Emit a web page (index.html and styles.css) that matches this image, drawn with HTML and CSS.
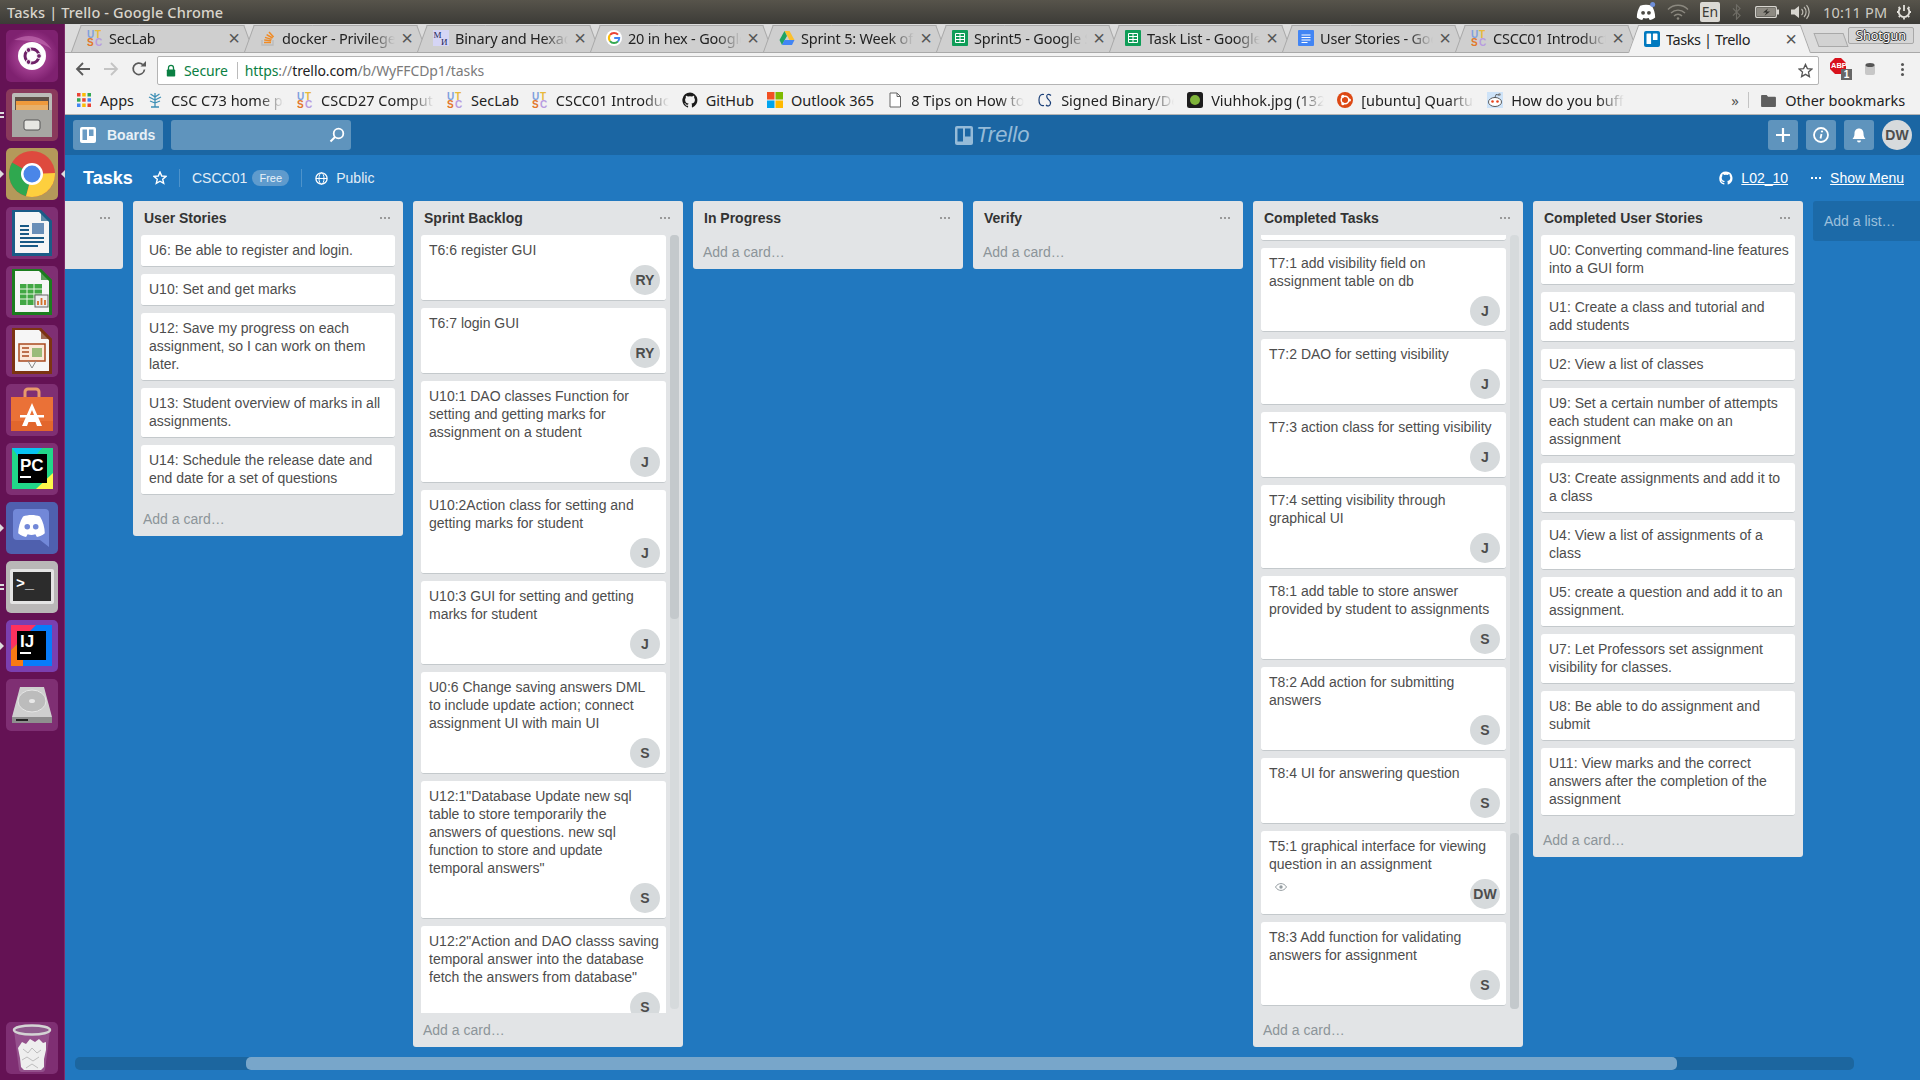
FILE: index.html
```html
<!DOCTYPE html>
<html lang="en">
<head>
<meta charset="utf-8">
<title>Tasks | Trello</title>
<link rel="stylesheet" href="styles.css">
</head>
<body>
<svg class="defs" aria-hidden="true">
  <symbol id="so" viewBox="0 0 16 16">
    <path d="M2 10v5h11v-5" fill="none" stroke="#bbb" stroke-width="1.4"/>
    <path d="M4 12.5h7M4.2 10l7 .7M5 7.4l6.6 2M6.6 4.6l6 3.4M9 2l4.6 5" fill="none" stroke="#f08a24" stroke-width="1.5"/>
  </symbol>
  <symbol id="goog" viewBox="0 0 16 16">
    <circle cx="8" cy="8" r="8" fill="#fff"/>
    <path d="M12 4.7A5.2 5.2 0 0 0 4 4.9" fill="none" stroke="#ea4335" stroke-width="2"/>
    <path d="M4 4.9a5.2 5.2 0 0 0 0 6.2" fill="none" stroke="#fbbc05" stroke-width="2"/>
    <path d="M4 11.1a5.2 5.2 0 0 0 8 .2" fill="none" stroke="#34a853" stroke-width="2"/>
    <path d="M12 11.3A5.2 5.2 0 0 0 13.2 8H8.2" fill="none" stroke="#4285f4" stroke-width="2"/>
  </symbol>
  <symbol id="drive" viewBox="0 0 16 16">
    <path d="M5.5 1h5l5 9h-5z" fill="#fbc02d"/><path d="M5.5 1L0.5 10l2.5 5 5-9z" fill="#1fa463"/><path d="M3 15h10l2.5-5h-10z" fill="#4285f4"/>
  </symbol>
  <symbol id="sheet" viewBox="0 0 16 16">
    <rect width="16" height="16" rx="1" fill="#0f9d58"/>
    <path d="M3.5 3.5h9v9h-9zM3.5 6.5h9M3.5 9.5h9M8 3.5v9" fill="none" stroke="#fff" stroke-width="1"/>
  </symbol>
  <symbol id="gdoc" viewBox="0 0 16 16">
    <rect width="16" height="16" rx="1" fill="#4285f4"/>
    <path d="M3.5 5h9M3.5 7.5h9M3.5 10h9M3.5 12.5h6" stroke="#fff" stroke-width="1"/>
  </symbol>
  <symbol id="tr" viewBox="0 0 16 16">
    <rect width="16" height="16" rx="2" fill="currentColor"/>
    <rect x="2.5" y="2.5" width="4.6" height="10.5" rx=".6" class="tr-b"/><rect x="8.9" y="2.5" width="4.6" height="6.5" rx=".6" class="tr-b"/>
  </symbol>
  <symbol id="gh" viewBox="0 0 16 16">
    <path d="M8 .5a7.7 7.7 0 0 0-2.4 15c.4.1.5-.2.5-.4v-1.4c-2.1.5-2.6-1-2.6-1-.4-.9-.9-1.1-.9-1.1-.7-.5 0-.5 0-.5.8.1 1.2.8 1.2.8.7 1.200 1.800.9 2.300.7 0-.5.300-.9.500-1.100-1.700-.2-3.500-.9-3.500-3.800 0-.8.300-1.500.8-2-.1-.2-.3-1 .1-2 0 0 .6-.2 2.100.8a7.300 7.300 0 0 1 3.800 0c1.500-1 2.100-.8 2.100-.8.400 1 .2 1.800.1 2 .5.500.8 1.200.8 2 0 2.900-1.800 3.600-3.500 3.800.3.200.5.700.5 1.400v2.100c0 .2.100.5.500.4A7.700 7.700 0 0 0 8 .5z" fill="currentColor"/>
  </symbol>
  <symbol id="dc" viewBox="0 0 24 24">
    <path d="M5 4.500C9 2.800 15 2.800 19 4.500C21.500 8.500 23 13.500 23 18.500C21 20.300 18.500 21.200 16.500 21.500L15.200 19.300C13 20 11 20 8.800 19.300L7.500 21.500C5.500 21.200 3 20.300 1 18.500C1 13.500 2.500 8.500 5 4.500Z" fill="currentColor"/>
  </symbol>
  <symbol id="doc" viewBox="0 0 52 52">
    <path d="M6 3h29l11 11v35H6z" fill="currentColor"/>
    <path d="M9 5h24l10 10v31H9z" fill="#f6f6f6"/>
    <path d="M35 3l11 11H35z" fill="currentColor" opacity=".7"/>
  </symbol>
</svg>

<header class="panel">
  <span class="panel-title">Tasks | Trello - Google Chrome</span>
  <div class="tray">
    <span class="tray-i t-dc">
      <svg class="i20" viewBox="0 0 24 24"><use href="#dc"/><circle cx="8.500" cy="13" r="2.300" fill="#4c4a44"/><circle cx="15.500" cy="13" r="2.300" fill="#4c4a44"/><circle cx="20" cy="3" r="3" fill="#6e8ed8"/></svg>
    </span>
    <svg class="t-wifi" viewBox="0 0 22 16"><path d="M1 5.500a14 14 0 0 1 20 0M4 9a10 10 0 0 1 14 0M7 12a5.500 5.500 0 0 1 8 0" fill="none" stroke="#8b887f" stroke-width="1.400"/><circle cx="11" cy="14.500" r="1.300" fill="#8b887f"/></svg>
    <span class="t-en">En</span>
    <svg class="t-bt" viewBox="0 0 10 18"><path d="M1 5l8 8-4 4V1l4 4-8 8" fill="none" stroke="#6f6d66" stroke-width="1.300"/></svg>
    <svg class="t-bat" viewBox="0 0 24 12"><rect x=".7" y=".7" width="20.600" height="10.600" rx="1" fill="none" stroke="#d8d6d0" stroke-width="1.300"/><rect x="22" y="3.500" width="2" height="5" fill="#d8d6d0"/><rect x="2" y="2" width="18" height="8" fill="#8d8a82"/><path d="M13 2.500L8 6.500h3.500L9.500 9.800 15 5.500h-3.500z" fill="#2f2e2a"/></svg>
    <svg class="t-vol" viewBox="0 0 20 16"><path d="M1 5.500h3.500L9 2v12L4.500 10.500H1z" fill="#d8d6d0"/><path d="M11.500 5a4 4 0 0 1 0 6M14 3a7 7 0 0 1 0 10M16.500 1.200a10 10 0 0 1 0 13.600" fill="none" stroke="#bdbab2" stroke-width="1.200"/></svg>
    <span class="t-clock">10:11 PM</span>
    <svg class="t-gear" viewBox="0 0 16 16"><path d="M8 1v6" stroke="#e4e2dc" stroke-width="1.800"/><path d="M4.500 3.800a5.300 5.300 0 1 0 7 0" fill="none" stroke="#e4e2dc" stroke-width="1.800"/><path d="M1 8h1.500M13.500 8H15M8 14v1.500M2.600 3l1 1M12.400 4l1-1M2.800 13l1-1M12.200 12l1 1" stroke="#e4e2dc" stroke-width="1.800"/></svg>
  </div>
</header>

<div class="desk">
  <nav class="launcher">
    <div class="tile">
      <svg viewBox="0 0 52 52"><defs><radialGradient id="gd"><stop offset="0" stop-color="#c45bb0"/><stop offset="1" stop-color="#7f2170"/></radialGradient></defs><rect width="52" height="52" rx="5" fill="url(#gd)"/><path d="M8 10c14-8 30-4 38 10-6-6-18-10-38-10z" fill="#d27fc0" opacity=".5"/><circle cx="26" cy="26" r="14" fill="#fff"/><circle cx="26" cy="26" r="7" fill="none" stroke="#6f2168" stroke-width="3"/><circle cx="33" cy="26" r="2.400" fill="#6f2168" stroke="#fff"/><circle cx="22.500" cy="20" r="2.400" fill="#6f2168" stroke="#fff"/><circle cx="22.500" cy="32" r="2.400" fill="#6f2168" stroke="#fff"/></svg>
    </div>
    <div class="tile run-l2">
      <svg viewBox="0 0 52 52"><rect width="52" height="52" rx="5" fill="#8a3a5c"/><rect x="6" y="4" width="40" height="44" rx="2" fill="#bcbcb8"/><rect x="9" y="8" width="34" height="13" fill="#5e5048"/><rect x="10" y="12" width="32" height="9" fill="#ef9a3c"/><rect x="10" y="16" width="32" height="5" fill="#e8b06a"/><rect x="6" y="21" width="40" height="27" fill="#a7a7a3"/><rect x="18" y="31" width="16" height="10" rx="2" fill="#e6e6e2" stroke="#555"/></svg>
    </div>
    <div class="tile run-l run-r">
      <svg viewBox="0 0 52 52"><rect width="52" height="52" rx="5" fill="#b4995a"/><circle cx="26" cy="26" r="23" fill="#de4a3e"/><path d="M26 26L6.100 14.500A23 23 0 0 0 20 48.200z" fill="#2fa84f"/><path d="M26 26l23-1A23 23 0 0 1 20 48.200z" fill="#fdcf3e"/><circle cx="26" cy="26" r="11" fill="#fff"/><circle cx="26" cy="26" r="8.500" fill="#4a86e8"/></svg>
    </div>
    <div class="tile tile-doc writer">
      <svg viewBox="0 0 52 52"><use href="#doc"/><path d="M14 19h9M14 23h9M14 27h9M14 31h24M14 35h24M14 39h18" stroke="#1a5a85" stroke-width="2"/><rect x="26" y="16" width="12" height="11" fill="#6a8fb8"/></svg>
    </div>
    <div class="tile tile-doc calc">
      <svg viewBox="0 0 52 52"><use href="#doc"/><rect x="14" y="18" width="22" height="21" fill="#43a845"/><path d="M14 23h22M14 28h22M14 33h22M21 18v21M28 18v21" stroke="#eaf5e5"/><rect x="29" y="29" width="13" height="12" fill="#eee" stroke="#666"/><path d="M32 39v-4M35.500 39v-7M39 39v-5" stroke="#d3702b" stroke-width="1.800"/></svg>
    </div>
    <div class="tile tile-doc impress">
      <svg viewBox="0 0 52 52"><use href="#doc"/><rect x="13" y="19" width="26" height="17" fill="#fbe8d8" stroke="#a9491f" stroke-width="1.500"/><path d="M16 23h7M16 27h7M16 31h7" stroke="#a9491f" stroke-width="1.500"/><rect x="26" y="23" width="10" height="9" fill="#9bbb7a"/><path d="M26 43l-4-7M26 43l4-7" stroke="#888"/></svg>
    </div>
    <div class="tile tile-purple">
      <svg viewBox="0 0 52 52"><path d="M19 15V8a3 3 0 0 1 3-3h8a3 3 0 0 1 3 3v7" fill="none" stroke="#e89a6b" stroke-width="3"/><path d="M5 13h42v34H5z" fill="#ea7137"/><path d="M5 37h42v10H5z" fill="#e2662c"/><path d="M26 19l-10 23h5l1.500-4h7l1.500 4h5zM24 31l2-5 2 5z" fill="#fff"/><rect x="14" y="31" width="24" height="2.500" fill="#fff"/></svg>
    </div>
    <div class="tile tile-purple">
      <svg viewBox="0 0 52 52"><rect x="6" y="5" width="41" height="41" fill="#21d789"/><path d="M6 5h30L20 24z" fill="#07c3f2"/><path d="M47 5v25L30 46h17z" fill="#fcf84a"/><rect x="12" y="11" width="29" height="29" fill="#000"/><text x="14" y="28" class="tile-t">PC</text><rect x="14" y="33" width="11" height="2" fill="#fff"/></svg>
    </div>
    <div class="tile run-l dc-tile">
      <svg viewBox="0 0 52 52"><rect width="52" height="52" rx="5" fill="#4f60ae"/><path d="M11 7h28a4 4 0 0 1 4 4v34l-9-7H11a4 4 0 0 1-4-4V11a4 4 0 0 1 4-4z" fill="#7288d8"/><svg x="11" y="9" width="29" height="29" viewBox="0 0 24 24" class="white"><use href="#dc"/><circle cx="8.500" cy="13" r="2.300" fill="#7288d8"/><circle cx="15.500" cy="13" r="2.300" fill="#7288d8"/></svg></svg>
    </div>
    <div class="tile run-l2">
      <svg viewBox="0 0 52 52"><rect width="52" height="52" rx="5" fill="#b9b7b7"/><rect x="4" y="8" width="44" height="35" rx="2" fill="#e4e4e4"/><rect x="7" y="11" width="38" height="29" fill="#2c2c2c"/><text x="10" y="27" class="tile-t2">&gt;_</text></svg>
    </div>
    <div class="tile run-l ij-tile">
      <svg viewBox="0 0 52 52"><rect width="52" height="52" rx="5" fill="#7b3fb0"/><rect x="5" y="5" width="41" height="41" fill="#087cfa"/><path d="M5 5h25L5 30z" fill="#fe315d"/><path d="M5 30l12-12v28H5z" fill="#f97a12"/><rect x="11" y="11" width="29" height="29" fill="#000"/><text x="14" y="27" class="tile-t">IJ</text><rect x="14" y="32" width="11" height="2" fill="#fff"/></svg>
    </div>
    <div class="tile tile-purple">
      <svg viewBox="0 0 52 52"><path d="M14 8h24l8 30v6H6v-6z" fill="#cfcfcf"/><ellipse cx="26" cy="22" rx="14" ry="11" fill="#bcbcbc" stroke="#e6e6e6"/><ellipse cx="26" cy="22" rx="3" ry="2" fill="#e8e8e8"/><path d="M6 38h40v6H6z" fill="#8f8f8f"/><rect x="10" y="40" width="12" height="2" fill="#222"/></svg>
    </div>
    <div class="tile tile-purple trash">
      <svg viewBox="0 0 52 52"><path d="M8 8l5 40a3 3 0 0 0 3 2h20a3 3 0 0 0 3-2l5-40z" fill="#a66ca1" opacity=".55"/><path d="M12 26l4-6 4 2 4-5 5 3 4-3 4 4 3-1 0 8-2 9 0 8-3 3H18l-3-3-1-9z" fill="#eeeeee"/><path d="M17 27l5 4 4-5 5 5 4-3M16 38l5-3 6 4 6-4M20 46l6-4 6 4" fill="none" stroke="#bdbdbd"/><ellipse cx="26" cy="8" rx="18" ry="4.500" fill="#8e5a8c" stroke="#d4d4d4" stroke-width="2.500"/></svg>
    </div>
  </nav>

  <div class="chrome">
    <div class="tabstrip">
      <div class="tab"><svg class="fav" viewBox="0 0 16 16"><text x="0" y="7.500" class="fav-l fu">U</text><text x="8" y="7.500" class="fav-l ft">T</text><text x="0" y="15.500" class="fav-l fs">S</text><text x="8" y="15.500" class="fav-l fc">C</text></svg><span class="tab-t fade">SecLab</span><span class="tab-x">×</span></div>
      <div class="tab"><svg class="fav"><use href="#so"/></svg><span class="tab-t fade">docker - Privileged</span><span class="tab-x">×</span></div>
      <div class="tab"><svg class="fav" viewBox="0 0 16 16"><rect width="16" height="16" fill="#d5d5f5"/><text x="0.500" y="8" class="fav-s">M</text><text x="8" y="15" class="fav-s">И</text></svg><span class="tab-t fade">Binary and Hexadecimal</span><span class="tab-x">×</span></div>
      <div class="tab"><svg class="fav"><use href="#goog"/></svg><span class="tab-t fade">20 in hex - Google Search</span><span class="tab-x">×</span></div>
      <div class="tab"><svg class="fav"><use href="#drive"/></svg><span class="tab-t fade">Sprint 5: Week of Mar</span><span class="tab-x">×</span></div>
      <div class="tab"><svg class="fav"><use href="#sheet"/></svg><span class="tab-t fade">Sprint5 - Google Sheets</span><span class="tab-x">×</span></div>
      <div class="tab"><svg class="fav"><use href="#sheet"/></svg><span class="tab-t fade">Task List - Google Sheets</span><span class="tab-x">×</span></div>
      <div class="tab"><svg class="fav"><use href="#gdoc"/></svg><span class="tab-t fade">User Stories - Google Docs</span><span class="tab-x">×</span></div>
      <div class="tab"><svg class="fav" viewBox="0 0 16 16"><text x="0" y="7.500" class="fav-l fu">U</text><text x="8" y="7.500" class="fav-l ft">T</text><text x="0" y="15.500" class="fav-l fs">S</text><text x="8" y="15.500" class="fav-l fc">C</text></svg><span class="tab-t fade">CSCC01 Introduction</span><span class="tab-x">×</span></div>
      <div class="tab tab-on"><svg class="fav fav-tr"><use href="#tr"/></svg><span class="tab-t tab-t-on">Tasks | Trello</span><span class="tab-x">×</span></div>
      <div class="newtab"></div>
      <div class="profile">Shotgun</div>
    </div>

    <div class="toolbar">
      <svg class="tb-i" viewBox="0 0 16 16"><path d="M15 8H2M8 2L2 8l6 6" fill="none" stroke="#5a5a5a" stroke-width="1.800"/></svg>
      <svg class="tb-i tb-f" viewBox="0 0 16 16"><path d="M1 8h13M8 2l6 6-6 6" fill="none" stroke="#c4c4c4" stroke-width="1.800"/></svg>
      <svg class="tb-i tb-r" viewBox="0 0 16 16"><path d="M13.500 8.500A5.700 5.700 0 1 1 11.800 3.700" fill="none" stroke="#5a5a5a" stroke-width="1.700"/><path d="M9.500 5.500H15V0z" fill="#5a5a5a"/></svg>
      <div class="omni">
        <svg class="lock" viewBox="0 0 10 13"><path d="M2.500 6V3.800a2.500 2.500 0 0 1 5 0V6" fill="none" stroke="#0b8043" stroke-width="1.300"/><rect x=".8" y="5.500" width="8.400" height="7" rx=".8" fill="#0b8043"/></svg>
        <span class="secure">Secure</span>
        <span class="omni-div"></span>
        <span class="url"><span class="u-g">https</span><span class="u-s">://</span><span class="u-d">trello.com</span><span class="u-s">/b/WyFFCDp1/tasks</span></span>
        <svg class="o-star" viewBox="0 0 16 16"><path d="M8 1.500l2 4.500 4.800.5-3.600 3.200 1 4.800L8 12.100l-4.200 2.400 1-4.800L1.200 6.500 6 6z" fill="none" stroke="#555" stroke-width="1.400"/></svg>
      </div>
      <div class="abp">
        <svg viewBox="0 0 16 16"><path d="M5 0h6l5 5v6l-5 5H5l-5-5V5z" fill="#d8121c"/></svg>
        <span class="abp-t">ABP</span><span class="abp-n">1</span>
      </div>
      <svg class="jar" viewBox="0 0 12 14"><rect x="1" y="2" width="10" height="11" rx="2" fill="#c7c7c7"/><ellipse cx="6" cy="3" rx="4.500" ry="2" fill="#555"/></svg>
      <span class="menu-dots"></span>
    </div>

    <div class="bookmarks">
      <div class="bm"><svg class="fav" viewBox="0 0 16 16"><g><rect x="1" y="1" width="3.500" height="3.500" fill="#ea4335"/><rect x="6.200" y="1" width="3.500" height="3.500" fill="#fbbc05"/><rect x="11.500" y="1" width="3.500" height="3.500" fill="#34a853"/><rect x="1" y="6.200" width="3.500" height="3.500" fill="#34a853"/><rect x="6.200" y="6.200" width="3.500" height="3.500" fill="#ea4335"/><rect x="11.500" y="6.200" width="3.500" height="3.500" fill="#4285f4"/><rect x="1" y="11.500" width="3.500" height="3.500" fill="#4285f4"/><rect x="6.200" y="11.500" width="3.500" height="3.500" fill="#fbbc05"/><rect x="11.500" y="11.500" width="3.500" height="3.500" fill="#ea4335"/></g></svg><span class="bm-t">Apps</span></div>
      <div class="bm"><svg class="fav" viewBox="0 0 16 16"><path d="M8 1v14M8 5L3.500 2M8 5l4.500-3M8 8L2 5M8 8l6-3M8 11L3 9M8 11l5-2M4 15h8" fill="none" stroke="#3d8fb5" stroke-width="1.300"/></svg><span class="bm-t bm-cut fade">CSC C73 home page</span></div>
      <div class="bm"><svg class="fav" viewBox="0 0 16 16"><text x="0" y="7.500" class="fav-l fu">U</text><text x="8" y="7.500" class="fav-l ft">T</text><text x="0" y="15.500" class="fav-l fs">S</text><text x="8" y="15.500" class="fav-l fc">C</text></svg><span class="bm-t bm-cut fade">CSCD27 Computer Security</span></div>
      <div class="bm"><svg class="fav" viewBox="0 0 16 16"><text x="0" y="7.500" class="fav-l fu">U</text><text x="8" y="7.500" class="fav-l ft">T</text><text x="0" y="15.500" class="fav-l fs">S</text><text x="8" y="15.500" class="fav-l fc">C</text></svg><span class="bm-t">SecLab</span></div>
      <div class="bm"><svg class="fav" viewBox="0 0 16 16"><text x="0" y="7.500" class="fav-l fu">U</text><text x="8" y="7.500" class="fav-l ft">T</text><text x="0" y="15.500" class="fav-l fs">S</text><text x="8" y="15.500" class="fav-l fc">C</text></svg><span class="bm-t bm-cut fade">CSCC01 Introduction</span></div>
      <div class="bm"><svg class="fav fav-gh"><use href="#gh"/></svg><span class="bm-t">GitHub</span></div>
      <div class="bm"><svg class="fav" viewBox="0 0 16 16"><rect width="7.500" height="7.500" fill="#f25022"/><rect x="8.500" width="7.500" height="7.500" fill="#7fba00"/><rect y="8.500" width="7.500" height="7.500" fill="#00a4ef"/><rect x="8.500" y="8.500" width="7.500" height="7.500" fill="#ffb900"/></svg><span class="bm-t">Outlook 365</span></div>
      <div class="bm"><svg class="fav" viewBox="0 0 16 16"><path d="M3 1h7l3.500 3.500V15H3z" fill="#fff" stroke="#666"/><path d="M10 1v3.500h3.500" fill="none" stroke="#666"/></svg><span class="bm-t bm-cut fade">8 Tips on How to Use</span></div>
      <div class="bm"><svg class="fav" viewBox="0 0 16 16"><path d="M7 2.500C3 1.500 2 5 2 8s1 6.500 5 5.500M14 3.500C11 1 9 3 10 5.500s4 3 3.500 6-3 3-4.500 1.500" fill="none" stroke="#1a3f78" stroke-width="1.200"/></svg><span class="bm-t bm-cut fade">Signed Binary/Decimal</span></div>
      <div class="bm"><svg class="fav" viewBox="0 0 16 16"><rect width="16" height="16" rx="2.500" fill="#1d1d1d"/><circle cx="8" cy="8" r="5" fill="#7fb43a"/></svg><span class="bm-t bm-cut fade">Viuhhok.jpg (1320×1080)</span></div>
      <div class="bm"><svg class="fav" viewBox="0 0 16 16"><circle cx="8" cy="8" r="8" fill="#dd4814"/><circle cx="8" cy="8" r="3.800" fill="none" stroke="#fff" stroke-width="1.500"/><circle cx="12.500" cy="8" r="1.500" fill="#fff"/><circle cx="5.800" cy="4.200" r="1.500" fill="#fff"/><circle cx="5.800" cy="11.800" r="1.500" fill="#fff"/></svg><span class="bm-t bm-cut fade">[ubuntu] Quartus Install</span></div>
      <div class="bm"><svg class="fav" viewBox="0 0 16 16"><rect width="16" height="16" fill="#cee3f8"/><ellipse cx="8" cy="10" rx="6.500" ry="4.500" fill="#fff" stroke="#333" stroke-width=".8"/><circle cx="5.500" cy="9.500" r="1.300" fill="#e8421a"/><circle cx="10.500" cy="9.500" r="1.300" fill="#e8421a"/><circle cx="12.500" cy="2.500" r="1.200" fill="#888"/><path d="M8 5.500L9 2.500l3 .5" fill="none" stroke="#333" stroke-width=".7"/></svg><span class="bm-t bm-cut fade">How do you buff a</span></div>
      <span class="bm-more">»</span>
      <span class="bm-div"></span>
      <div class="bm bm-last"><svg class="folder" viewBox="0 0 16 14"><path d="M0 2a1 1 0 0 1 1-1h5l1.500 2H15a1 1 0 0 1 1 1v9a1 1 0 0 1-1 1H1a1 1 0 0 1-1-1z" fill="#5f5f5f"/></svg><span class="bm-t">Other bookmarks</span></div>
    </div>

    <div class="t-head">
      <div class="t-btn t-boards">
        <svg class="i16 white" viewBox="0 0 16 16"><rect width="16" height="16" rx="2" fill="#fff"/><rect x="2.500" y="2.500" width="4.500" height="10.500" fill="#6b9cc4"/><rect x="9" y="2.500" width="4.500" height="6.500" fill="#6b9cc4"/></svg>
        <span>Boards</span>
      </div>
      <div class="t-search">
        <svg class="i16" viewBox="0 0 16 16"><circle cx="9.500" cy="6.500" r="4.800" fill="none" stroke="#fff" stroke-width="1.800"/><path d="M6 10l-4.500 4.500" stroke="#fff" stroke-width="2"/></svg>
      </div>
      <div class="t-logo">
        <svg class="logo-i" viewBox="0 0 18 19"><rect width="18" height="19" rx="2" fill="#95bbd8"/><rect x="2.500" y="2.500" width="5.500" height="13" fill="#1b66a3"/><rect x="10" y="2.500" width="5.500" height="8" fill="#1b66a3"/></svg>
        <span class="logo-t">Trello</span>
      </div>
      <div class="t-right">
        <div class="t-btn t-sq"><svg class="i16" viewBox="0 0 16 16"><path d="M8 1v14M1 8h14" stroke="#fff" stroke-width="2.200"/></svg></div>
        <div class="t-btn t-sq"><svg class="i16" viewBox="0 0 16 16"><circle cx="8" cy="8" r="7" fill="none" stroke="#fff" stroke-width="1.800"/><path d="M8.500 7L7.500 11.500" stroke="#fff" stroke-width="1.800"/><circle cx="9" cy="4.500" r="1.100" fill="#fff"/></svg></div>
        <div class="t-btn t-sq"><svg class="i16" viewBox="0 0 16 16"><path d="M8 1.500c-3 0-4.500 2.300-4.500 5 0 3-.9 4-2 5.500h13c-1.100-1.500-2-2.500-2-5.500 0-2.700-1.500-5-4.500-5z" fill="#fff"/><path d="M6 13.500a2 2 0 0 0 4 0z" fill="#fff"/></svg></div>
        <div class="t-me">DW</div>
      </div>
    </div>

    <div class="stage">
      <div class="b-head">
        <span class="b-title">Tasks</span>
        <svg class="b-star" viewBox="0 0 14 14"><path d="M7 1l1.700 4 4.300.4-3.300 2.800 1 4.200L7 10.200 3.300 12.400l1-4.200L1 5.400 5.300 5z" fill="none" stroke="#fff" stroke-width="1.400"/></svg>
        <span class="b-div"></span>
        <span class="b-team">CSCC01</span>
        <span class="b-free">Free</span>
        <span class="b-div b-div2"></span>
        <svg class="b-globe" viewBox="0 0 13 13"><circle cx="6.500" cy="6.500" r="5.600" fill="none" stroke="#fff" stroke-width="1.300"/><ellipse cx="6.500" cy="6.500" rx="2.500" ry="5.600" fill="none" stroke="#fff"/><path d="M1 6.500h11" stroke="#fff"/></svg>
        <span class="b-pub">Public</span>
        <div class="b-right">
          <svg class="b-gh"><use href="#gh"/></svg>
          <a class="b-link b-l1">L02_10</a>
          <span class="b-dots"></span>
          <a class="b-link">Show Menu</a>
        </div>
      </div>

      <div class="board">
        <section class="list list-stub"><div class="l-head"><span class="l-name"></span><span class="dots"></span></div></section>

        <section class="list">
          <div class="l-head"><span class="l-name">User Stories</span><span class="dots"></span></div>
          <div class="stack">
            <div class="card"><p>U6: Be able to register and login.</p></div>
            <div class="card"><p>U10: Set and get marks</p></div>
            <div class="card"><p>U12: Save my progress on each assignment, so I can work on them later.</p></div>
            <div class="card"><p>U13: Student overview of marks in all assignments.</p></div>
            <div class="card"><p>U14: Schedule the release date and end date for a set of questions</p></div>
          </div>
          <div class="l-add">Add a card…</div>
        </section>

        <section class="list list-tall">
          <div class="l-head"><span class="l-name">Sprint Backlog</span><span class="dots"></span></div>
          <div class="scroller">
            <div class="stack stack-sc">
              <div class="card"><p>T6:6 register GUI</p><div class="mem"><span class="av">RY</span></div></div>
              <div class="card"><p>T6:7 login GUI</p><div class="mem"><span class="av">RY</span></div></div>
              <div class="card"><p>U10:1 DAO classes Function for setting and getting marks for assignment on a student</p><div class="mem"><span class="av">J</span></div></div>
              <div class="card"><p>U10:2Action class for setting and getting marks for student</p><div class="mem"><span class="av">J</span></div></div>
              <div class="card"><p>U10:3 GUI for setting and getting marks for student</p><div class="mem"><span class="av">J</span></div></div>
              <div class="card"><p>U0:6 Change saving answers DML to include update action; connect assignment UI with main UI</p><div class="mem"><span class="av">S</span></div></div>
              <div class="card"><p>U12:1"Database Update new sql table to store temporarily the answers of questions. new sql function to store and update temporal answers"</p><div class="mem"><span class="av">S</span></div></div>
              <div class="card"><p>U12:2"Action and DAO classs saving temporal answer into the database fetch the answers from database"</p><div class="mem"><span class="av">S</span></div></div>
            </div>
            <div class="vbar"><div class="vthumb vt-top"></div></div>
          </div>
          <div class="l-add">Add a card…</div>
        </section>

        <section class="list">
          <div class="l-head"><span class="l-name">In Progress</span><span class="dots"></span></div>
          <div class="l-add">Add a card…</div>
        </section>

        <section class="list">
          <div class="l-head"><span class="l-name">Verify</span><span class="dots"></span></div>
          <div class="l-add">Add a card…</div>
        </section>

        <section class="list list-tall">
          <div class="l-head"><span class="l-name">Completed Tasks</span><span class="dots"></span></div>
          <div class="scroller">
            <div class="stack stack-sc">
              <div class="card card-sliver"></div>
              <div class="card"><p>T7:1 add visibility field on assignment table on db</p><div class="mem"><span class="av">J</span></div></div>
              <div class="card"><p>T7:2 DAO for setting visibility</p><div class="mem"><span class="av">J</span></div></div>
              <div class="card"><p>T7:3 action class for setting visibility</p><div class="mem"><span class="av">J</span></div></div>
              <div class="card"><p>T7:4 setting visibility through graphical UI</p><div class="mem"><span class="av">J</span></div></div>
              <div class="card"><p>T8:1 add table to store answer provided by student to assignments</p><div class="mem"><span class="av">S</span></div></div>
              <div class="card"><p>T8:2 Add action for submitting answers</p><div class="mem"><span class="av">S</span></div></div>
              <div class="card"><p>T8:4 UI for answering question</p><div class="mem"><span class="av">S</span></div></div>
              <div class="card"><p>T5:1 graphical interface for viewing question in an assignment</p><div class="mem mem-eye"><svg class="eye" viewBox="0 0 12 8"><path d="M.5 4C2 1.500 4 .6 6 .6s4 .9 5.500 3.400C10 6.500 8 7.400 6 7.400S2 6.500.5 4z" fill="none" stroke="#959da1"/><circle cx="6" cy="4" r="1.700" fill="#959da1"/></svg><span class="av">DW</span></div></div>
              <div class="card"><p>T8:3 Add function for validating answers for assignment</p><div class="mem"><span class="av">S</span></div></div>
            </div>
            <div class="vbar"><div class="vthumb vt-bot"></div></div>
          </div>
          <div class="l-add">Add a card…</div>
        </section>

        <section class="list">
          <div class="l-head"><span class="l-name">Completed User Stories</span><span class="dots"></span></div>
          <div class="stack">
            <div class="card"><p>U0: Converting command-line features into a GUI form</p></div>
            <div class="card"><p>U1: Create a class and tutorial and add students</p></div>
            <div class="card"><p>U2: View a list of classes</p></div>
            <div class="card"><p>U9: Set a certain number of attempts each student can make on an assignment</p></div>
            <div class="card"><p>U3: Create assignments and add it to a class</p></div>
            <div class="card"><p>U4: View a list of assignments of a class</p></div>
            <div class="card"><p>U5: create a question and add it to an assignment.</p></div>
            <div class="card"><p>U7: Let Professors set assignment visibility for classes.</p></div>
            <div class="card"><p>U8: Be able to do assignment and submit</p></div>
            <div class="card"><p>U11: View marks and the correct answers after the completion of the assignment</p></div>
          </div>
          <div class="l-add">Add a card…</div>
        </section>

        <div class="add-list">Add a list…</div>
      </div>

      <div class="hbar"><div class="hthumb"></div></div>
    </div>
  </div>
</div>
</body>
</html>
```

FILE: styles.css
```css
* { box-sizing: border-box; }
html, body { margin: 0; height: 100%; overflow: hidden; }
body { width: 1920px; height: 1080px; font-family: "Liberation Sans", Arial, sans-serif; font-size: 14px; color: #4d4d4d; display: flex; flex-direction: column; }
p { margin: 0; }
svg { display: block; flex-shrink: 0; }
.defs { width: 0; height: 0; position: absolute; }
.fav-l { font: bold 10px "Liberation Sans", sans-serif; }
.fu { fill: #7fa0dd; }
.ft { fill: #e8b83a; }
.fs { fill: #e2772a; }
.fc { fill: #b89ce0; }
.fav-s { font: 9px "Liberation Serif", serif; fill: #225; }
.tr-b { fill: #fff; }
.white { color: #fff; }
.i16 { width: 16px; height: 16px; }
.i20 { width: 20px; height: 20px; }
.fade { -webkit-mask-image: linear-gradient(to right, #000 78%, transparent 100%); mask-image: linear-gradient(to right, #000 78%, transparent 100%); }

/* top panel */
.panel { height: 24px; flex: none; background: linear-gradient(#57544b, #3c3b37); display: flex; align-items: center; padding-left: 7px; color: #dfdbd2; }
.panel-title { font: 500 14.5px "Noto Sans", sans-serif; color: #d9d5cc; letter-spacing: .15px; }
.tray { margin-left: auto; display: flex; align-items: center; height: 24px; }
.tray-i { margin-right: 11px; color: #fff; }
.t-dc { display: block; margin-left: 0; }
.t-wifi { width: 22px; height: 16px; margin-right: 11px; }
.t-en { width: 20px; height: 20px; background: #dcdad5; color: #3c3b37; border-radius: 2px; font: 14px "Noto Sans", sans-serif; line-height: 20px; text-align: center; margin-right: 12px; }
.t-bt { width: 9px; height: 16px; margin-right: 14px; }
.t-bat { width: 24px; height: 12px; margin-right: 11px; }
.t-vol { width: 20px; height: 16px; margin-right: 13px; }
.t-clock { width: 60px; font: 14.5px "Noto Sans", sans-serif; color: #cfccc4; white-space: nowrap; margin-right: 13px; letter-spacing: .2px; }
.t-gear { width: 16px; height: 16px; margin-right: 8px; }

.desk { flex: 1; display: flex; min-height: 0; }

/* launcher */
.launcher { width: 65px; flex: none; background: #641254; border-right: 1px solid #7d2a6a; padding: 6px 0 6px 6px; display: flex; flex-direction: column; gap: 7px; }
.tile { width: 52px; height: 52px; position: relative; }
.tile svg { width: 52px; height: 52px; }
.trash { margin-top: auto; }
.tile-purple, .tile-doc { background: #7f2f73; border-radius: 5px; }
.writer { color: #1b5c87; }
.calc { color: #1c7d1e; }
.impress { color: #7c3412; }
.dc-tile svg svg { width: 29px; height: 29px; color: #fff; }
.tile-t { font: bold 17px "Liberation Sans", sans-serif; fill: #fff; }
.tile-t2 { font: bold 15px "Liberation Mono", monospace; fill: #fff; }
.run-l::before, .run-r::after, .run-l2::before { content: ""; position: absolute; top: 22px; border: 4px solid transparent; }
.run-l::before { left: -6px; border-left-color: #ddd; }
.run-r::after { right: -7px; border-right-color: #ddd; }
.run-l2::before { left: -6px; top: 23px; width: 4px; height: 2px; border: 0; background: #ddd; box-shadow: 0 4px 0 #ddd; }

.chrome { flex: 1; display: flex; flex-direction: column; min-width: 0; }

/* tabs */
.tabstrip { height: 29px; flex: none; background: #dcdcdc; display: flex; padding-left: 6px; border-bottom: 1px solid #a9a9a9; position: relative; }
.tab { width: 173px; flex: none; height: 28px; position: relative; isolation: isolate; display: flex; align-items: center; padding-left: 16px; font: 14.5px "Noto Sans", sans-serif; color: #222; }
.tab::before, .tab::after { content: ""; position: absolute; top: 1px; bottom: 0; width: 60%; background: #cfcfcf; border-top: 1px solid #a9a9a9; z-index: -1; transform-origin: bottom; }
.tab::before { left: 0; border-left: 1px solid #a9a9a9; transform: skewX(-20deg); }
.tab::after { right: -10px; border-right: 1px solid #a9a9a9; transform: skewX(20deg); }
.tab-on { z-index: 2; height: 29px; }
.tab-on::before, .tab-on::after { background: #f2f2f2; }
.fav { width: 16px; height: 16px; }
.fav-tr { color: #0079bf; }
.tab-t { width: 113px; margin-left: 6px; white-space: nowrap; overflow: hidden; letter-spacing: -.2px; }
.tab-t-on { letter-spacing: -.4px; }
.tab-x { margin-left: 4px; width: 16px; text-align: center; font: 20px "Liberation Sans", sans-serif; color: #555; line-height: 20px; }
.newtab { width: 30px; height: 14px; margin: 9px 0 0 15px; background: #d2d2d2; border: 1px solid #a9a9a9; transform: skewX(20deg); flex: none; }
.profile { margin: 3px 6px 0 auto; width: 66px; height: 17px; border: 1px solid #a8a8a8; background: #d6d6d6; border-radius: 2px; font: 12.5px/15px "Noto Sans", sans-serif; text-align: center; color: #fff; text-shadow: 1px 0 0 #333, -1px 0 0 #333, 0 1px 0 #333, 0 -1px 0 #333; }

/* toolbar */
.toolbar { height: 33px; flex: none; background: #f2f2f2; display: flex; align-items: center; padding: 0 0 1px 10px; }
.tb-i { width: 16px; height: 16px; margin-right: 12px; }
.tb-r { margin-right: 10px; }
.omni { width: 1662px; height: 29px; background: #fff; border: 1px solid #b4b4b4; border-radius: 2px; display: flex; align-items: center; padding-left: 8px; margin-top: 2px; font: 14.5px "Noto Sans", sans-serif; }
.lock { width: 10px; height: 13px; }
.secure { color: #0b8043; margin-left: 8px; font-size: 14px; letter-spacing: -.1px; }
.omni-div { width: 1px; height: 17px; background: #bbb; margin: 0 7px 0 9px; }
.url { letter-spacing: -.1px; font-size: 14px; white-space: nowrap; }
.u-g { color: #0b8043; }
.u-s { color: #7a7a7a; }
.u-d { color: #222; }
.o-star { width: 15px; height: 15px; margin-left: auto; margin-right: 5px; }
.abp { width: 24px; height: 22px; position: relative; margin-left: 11px; }
.abp svg { width: 16px; height: 16px; }
.abp-t { position: absolute; left: 1px; top: 3px; font: bold 7.5px "Liberation Sans", sans-serif; color: #fff; }
.abp-n { position: absolute; left: 11px; top: 11px; width: 11px; height: 11px; background: #666; color: #fff; font: bold 10px/11px "Liberation Sans", sans-serif; text-align: center; }
.jar { width: 12px; height: 14px; margin-left: 10px; }
.menu-dots { width: 3px; height: 3px; background: #555; border-radius: 50%; margin-left: 25px; box-shadow: 0 -5px 0 #555, 0 5px 0 #555; }

/* bookmarks */
.bookmarks { height: 29px; flex: none; background: #f2f2f2; border-bottom: 1px solid #b4b4b4; display: flex; align-items: center; padding-left: 11px; font: 14.5px "Noto Sans", sans-serif; color: #222; }
.bm { display: flex; align-items: center; margin-right: 13px; flex: none; white-space: nowrap; }
.bm-t { margin-left: 8px; letter-spacing: 0; }
.bm-cut { width: 113px; overflow: hidden; }
.fav-gh { color: #1b1b1b; }
.bm-more { margin-left: 94px; font-size: 15px; color: #555; width: 17px; }
.bm-div { width: 1px; height: 16px; background: #c4c4c4; margin: 0 12px 0 0; }
.bm-last { margin-right: 0; }
.bm-last .bm-t { margin-left: 9px; }
.folder { width: 15px; height: 13px; }

/* trello header */
.t-head { height: 40px; flex: none; background: #1b66a3; display: flex; align-items: center; padding: 0 8px; }
.t-btn { height: 30px; background: #5f94bd; border-radius: 3px; display: flex; align-items: center; justify-content: center; color: #fff; }
.t-boards { width: 90px; justify-content: flex-start; padding-left: 7px; font-weight: bold; color: #e8f0f6; }
.t-boards span { margin-left: 11px; }
.t-search { width: 180px; height: 30px; margin-left: 8px; background: #5f94bd; border-radius: 3px; display: flex; align-items: center; justify-content: flex-end; padding-right: 6px; }
.t-logo { display: flex; align-items: center; margin-left: 604px; }
.logo-i { width: 18px; height: 19px; }
.logo-t { font: italic 22px "Liberation Sans", sans-serif; color: #95bbd8; margin-left: 3px; }
.t-right { margin-left: auto; display: flex; gap: 8px; }
.t-sq { width: 30px; }
.t-me { width: 30px; height: 30px; border-radius: 50%; background: #d6dadc; font-weight: bold; color: #4d4d4d; text-align: center; line-height: 30px; font-size: 14px; }

/* board */
.stage { flex: 1; background: #2178bf; display: flex; flex-direction: column; min-height: 0; }
.b-head { height: 46px; flex: none; display: flex; align-items: center; padding: 0 16px 0 18px; color: #fff; }
.b-title { font-size: 18px; font-weight: bold; width: 70px; }
.b-star { width: 14px; height: 14px; }
.b-div { width: 1px; height: 18px; background: rgba(255,255,255,.2); margin: 0 12px; }
.b-team { color: #e1edf6; }
.b-free { margin-left: 5px; width: 37px; height: 16px; border-radius: 8px; background: #5f9bcd; font-size: 11px; line-height: 16px; text-align: center; color: #e8f1f8; }
.b-div2 { margin-left: 12px; margin-right: 13px; }
.b-globe { width: 13px; height: 13px; }
.b-pub { margin-left: 8px; color: #e1edf6; }
.b-right { margin-left: auto; display: flex; align-items: center; }
.b-gh { width: 14px; height: 14px; color: #fff; }
.b-link { color: #fff; text-decoration: underline; }
.b-l1 { margin-left: 8px; }
.b-dots { width: 2px; height: 2px; background: #fff; margin: 0 17px 0 23px; box-shadow: 4px 0 0 #fff, 8px 0 0 #fff; }

.board { height: 846px; flex: none; display: flex; align-items: flex-start; gap: 10px; overflow: hidden; }
.list { width: 270px; flex: none; max-height: 846px; background: #e2e4e6; border-radius: 3px; display: flex; flex-direction: column; }
.list-tall { height: 846px; }
.list-stub { width: 58px; border-radius: 0 3px 3px 0; height: 68px; }
.l-head { height: 34px; flex: none; display: flex; align-items: center; justify-content: space-between; padding-left: 11px; padding-right: 14px; }
.l-name { font-weight: bold; color: #333; }
.dots { width: 2px; height: 2px; background: #999; margin-right: 3px; box-shadow: -4px 0 0 #999, 4px 0 0 #999; }
.stack { padding: 0 8px; display: flex; flex-direction: column; gap: 7px; }
.scroller { flex: 1; min-height: 0; display: flex; overflow: hidden; }
.stack-sc { width: 253px; flex: none; padding-right: 0; overflow: hidden; }
.card { background: #fff; border-radius: 3px; border-bottom: 1px solid #c4c9cc; padding: 6px 6px 7px 8px; flex: none; line-height: 18px; color: #4d4d4d; }
.card-sliver { height: 6px; padding: 0; border-radius: 0 0 3px 3px; }
.mem { display: flex; justify-content: flex-end; margin: 6px 0 -2px; }
.mem-eye { justify-content: space-between; margin-top: 6px; }
.eye { width: 12px; height: 8px; margin: 4px 0 0 6px; }
.av { width: 30px; height: 30px; border-radius: 50%; background: #d6dadc; font-weight: bold; line-height: 30px; text-align: center; color: #4d4d4d; }
.vbar { width: 9px; margin: 0 4px 4px 4px; background: #d6dadc; border-radius: 4px; flex: none; display: flex; flex-direction: column; }
.vthumb { background: #c4c9cc; border-radius: 4px; }
.vt-top { height: 384px; }
.vt-bot { height: 176px; margin-top: auto; }
.l-add { height: 34px; flex: none; line-height: 34px; padding-left: 10px; color: #8c9499; }
.stack + .l-add { margin-top: 7px; }
.add-list { width: 120px; height: 40px; flex: none; background: #1c6aa8; border-radius: 3px; color: #9cc0dc; line-height: 40px; padding-left: 11px; }

.hbar { margin: 10px 0 0 10px; width: 1779px; height: 13px; background: #1c669f; border-radius: 5px; flex: none; }
.hthumb { margin-left: 171px; width: 1431px; height: 13px; background: #78a6ca; border-radius: 5px; }
```
